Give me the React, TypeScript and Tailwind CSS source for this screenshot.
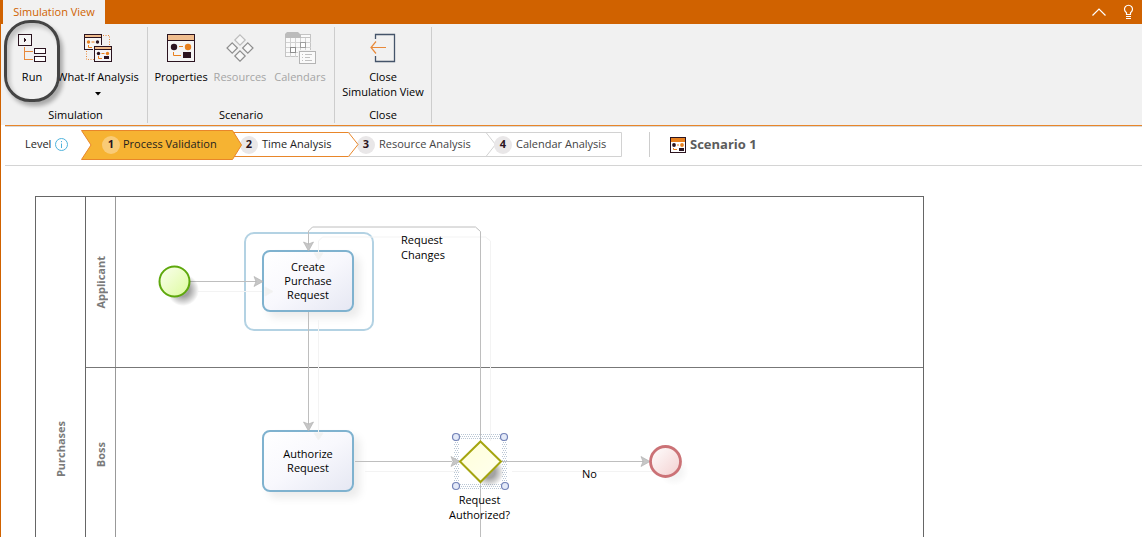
import React, { useState } from 'react';

const RunIcon = () => (
  <svg width="28" height="28" viewBox="0 0 28 28" fill="none" shapeRendering="crispEdges">
    <path d="M6.5 13v12.5H15M6.5 17.5H15" stroke="#e8893a" />
    <rect x="0.5" y="0.5" width="13" height="11" stroke="#2b1420" fill="#f5f5f5" />
    <path d="M6 3.5v5l3-2.5z" fill="#2b1420" />
    <rect x="16.5" y="14.5" width="11" height="5" stroke="#2b1420" fill="#fff" />
    <rect x="16.5" y="22.5" width="11" height="5" stroke="#2b1420" fill="#fff" />
  </svg>
);

const WhatIfIcon = () => (
  <svg width="28" height="28" viewBox="0 0 28 28" fill="none">
    <path d="M19 1.5h6.5V11M2.5 17v8.5H10" stroke="#e8893a" strokeDasharray="1 1.5" />
    <rect x="0.5" y="0.5" width="17" height="15" stroke="#2b1420" fill="#f5f5f5" />
    <rect x="1" y="1" width="16" height="2" fill="#f0bd8e" />
    <path d="M1 3.500h16" stroke="#2b1420" />
    <circle cx="4.5" cy="8" r="1.7" fill="#e8801e" />
    <path d="M7.5 8h3" stroke="#e8801e" />
    <circle cx="13.5" cy="8" r="1.7" fill="#2b1420" />
    <path d="M4.5 11v2.5H8" stroke="#e8801e" />
    <path d="M9 11h9v5H9z" fill="#f1f1f1" />
    <rect x="10.5" y="12.5" width="17" height="15" stroke="#2b1420" fill="#f5f5f5" />
    <rect x="11" y="13" width="16" height="2" fill="#f0bd8e" />
    <path d="M11 15.500h16" stroke="#2b1420" />
    <circle cx="14.5" cy="19.5" r="1.7" fill="#2b1420" />
    <path d="M17.5 19.5h3" stroke="#e8801e" />
    <circle cx="23.5" cy="19.5" r="1.7" fill="#e8801e" />
    <path d="M14.5 22v2.5H18" stroke="#e8801e" />
    <rect x="20" y="22" width="5" height="3" fill="#2b1420" />
  </svg>
);

const PropertiesIcon = () => (
  <svg width="28" height="28" viewBox="0 0 28 28" fill="none">
    <rect x="0.5" y="0.5" width="27" height="27" stroke="#2b1420" fill="#f5f5f5" />
    <rect x="1" y="1" width="26" height="5" fill="#f0bd8e" />
    <path d="M1 6.5h26" stroke="#2b1420" />
    <circle cx="7" cy="13" r="3.2" fill="#2b1420" />
    <path d="M12 12.5h4" stroke="#e8801e" />
    <circle cx="21" cy="13" r="3.2" fill="#e8801e" />
    <path d="M6.5 18v3.5H14" stroke="#e8801e" />
    <rect x="16" y="18" width="8" height="6" fill="#2b1420" />
  </svg>
);

const ResourcesIcon = () => (
  <svg width="28" height="28" viewBox="0 0 28 28" fill="none" strokeWidth="1.2">
    <path d="M14 0.8l5.2 5.2-5.200 5.200-5.200-5.200z" stroke="#bdbdbd" fill="#f8f8f8" />
    <path d="M6.200 8.8l5.200 5.200-5.200 5.200L1 14z" stroke="#8e8e8e" fill="#f8f8f8" />
    <path d="M21.800 8.8l5.200 5.200-5.200 5.200-5.200-5.200z" stroke="#8e8e8e" fill="#f8f8f8" />
    <path d="M14 16.800l5.200 5.200-5.200 5.200-5.200-5.200z" stroke="#8e8e8e" fill="#f8f8f8" />
  </svg>
);

const CalendarsIcon = () => (
  <svg width="31" height="32" viewBox="0 0 31 32" fill="none">
    <rect x="0.5" y="2.5" width="25" height="22" fill="#fafafa" stroke="#c4c4c4" />
    <path d="M5.500 6v19M10.500 6v19M15.500 6v19M20.500 6v19M1 10.500h25M1 15.500h25M1 20.500h25" stroke="#d2d2d2" />
    <path d="M0 2l2-2h11l3 3v3H0z" fill="#bcbcbc" />
    <path d="M16 5.500h9.500" stroke="#c4c4c4" />
    <rect x="5.500" y="15.500" width="5" height="5" stroke="#8f8f8f" fill="#fff" />
    <rect x="15.500" y="10.500" width="5" height="5" stroke="#9f9f9f" fill="#fff" />
    <path d="M13 18h13v8H13z" fill="#f1f1f1" />
    <rect x="14.500" y="19.500" width="16" height="12" stroke="#b4b4b4" fill="#fafafa" />
    <path d="M17 22.500h1M20 22.500h7M17 25.500h1M20 25.500h5M17 28.500h1M20 28.500h7" stroke="#c0c0c0" />
  </svg>
);

const CloseViewIcon = () => (
  <svg width="26" height="30" viewBox="0 0 26 30" fill="none">
    <path d="M5.500 6V1.500h19v27h-19V23" stroke="#44546a" strokeWidth="1.300" />
    <path d="M1 14.500h15M6 8.500l-5 6 5 6" stroke="#e8893a" strokeWidth="1.200" />
  </svg>
);

const ScenarioIcon = () => (
  <svg width="16" height="16" viewBox="0 0 16 16" fill="none">
    <rect x="0.5" y="0.5" width="15" height="15" fill="#fff" stroke="#2b1420" />
    <rect x="1" y="1" width="14" height="4" fill="#e8801e" />
    <circle cx="4" cy="8" r="1.900" fill="#2b1420" />
    <path d="M7 8h2" stroke="#e8801e" />
    <circle cx="12" cy="8" r="1.900" fill="#e8801e" />
    <path d="M3.500 11v1.500H7" stroke="#e8801e" />
    <rect x="9" y="11" width="5" height="3" fill="#2b1420" />
  </svg>
);

interface RibbonButtonProps {
  icon: React.ReactNode;
  label: React.ReactNode;
  className: string;
  disabled?: boolean;
  hasMenu?: boolean;
}

const RibbonButton: React.FC<RibbonButtonProps> = ({ icon, label, className, disabled, hasMenu }) => (
  <button
    disabled={disabled}
    className={`flex flex-col items-center pt-[3px] whitespace-nowrap disabled:text-[#a5a5a5] ${className}`}
  >
    <span className="mb-[3px] flex h-9 items-center justify-center">{icon}</span>
    <span className="block leading-[15px]">{label}</span>
    {hasMenu && (
      <svg className="mt-2" width="6" height="4" viewBox="0 0 6 4"><path d="M0 0h6L3 3.500z" fill="#000" /></svg>
    )}
  </button>
);

interface RibbonGroupProps {
  title: string;
  children: React.ReactNode;
}

const RibbonGroup: React.FC<RibbonGroupProps> = ({ title, children }) => (
  <section className="flex min-w-24 flex-col justify-between border-r border-[#cdcdcd] px-1">
    <div className="flex items-start">{children}</div>
    <h2 className="text-center leading-4">{title}</h2>
  </section>
);

const STEPS = [
  { name: 'Process Validation', width: 'w-[161px]', pad: 'pl-[21px] gap-[3px]' },
  { name: 'Time Analysis', width: 'w-[127px]', pad: 'pl-2 gap-1' },
  { name: 'Resource Analysis', width: 'w-[147px]', pad: 'pl-2 gap-1' },
  { name: 'Calendar Analysis', width: 'w-[136px]', pad: 'pl-2 gap-1' },
];

const STEP_SHAPES = [
  <svg width="161" height="30" viewBox="0 0 161 30" className="absolute inset-0">
    <path d="M0.500 0.500h151l9 14.500-9 14.500H.5l9.500-14.500z" fill="#f6b332" stroke="#e8862a" />
  </svg>,
  <svg width="127" height="25" viewBox="0 0 127 25" className="absolute inset-0">
    <path d="M0 0.500h116.500l9.500 12-9.500 12H0" fill="#fff" stroke="#e8862a" />
  </svg>,
  <svg width="147" height="25" viewBox="0 0 147 25" className="absolute inset-0">
    <path d="M0 0.500h147M0 24.500h147M137 0.500l9.500 12-9.500 12" fill="none" stroke="#d2d2d2" />
  </svg>,
  <svg width="136" height="25" viewBox="0 0 136 25" className="absolute inset-0">
    <path d="M0 0.500h135.500v24H0" fill="none" stroke="#d2d2d2" />
  </svg>,
];

const Connectors = () => (
  <svg className="absolute top-0 left-0" width="924" height="540" viewBox="0 166 924 540" fill="none">
    <defs>
      <linearGradient id="start" x1="0" y1="0" x2="1" y2="1">
        <stop offset="0" stopColor="#fbfff0" />
        <stop offset="1" stopColor="#dcfb9c" />
      </linearGradient>
      <linearGradient id="end" x1="0" y1="0" x2="1" y2="1">
        <stop offset="0" stopColor="#ffffff" />
        <stop offset="1" stopColor="#f3cfcf" />
      </linearGradient>
      <linearGradient id="gate" x1="0" y1="0" x2="1" y2="1">
        <stop offset="0" stopColor="#ffffd8" />
        <stop offset="1" stopColor="#fffff0" />
      </linearGradient>
      <radialGradient id="shade">
        <stop offset="0.4" stopColor="#000" stopOpacity="0.36" />
        <stop offset="1" stopColor="#000" stopOpacity="0" />
      </radialGradient>
      <pattern id="dots" width="4" height="4" patternUnits="userSpaceOnUse">
        <path d="M0 0h1v1H0zM2 0h1v1H2zM1 2h1v1H1zM3 2h1v1H3z" fill="#b9c6d4" />
      </pattern>
    </defs>

    {/* soft echo of the flow lines */}
    <g stroke="#f3f3f3">
      <path d="M198 291.500h64M318.500 320v118M318.500 260v-19l4-4h163l5 4v200M365 471.500h95M512 471.500h140" />
      <path d="M265 287l8 4.500-8 4.500zM314 253h9l-4.500 7zM314 433h9l-4.500 7z" fill="#f1f1f1" />
    </g>
    <g stroke="#bebebe">
      <path d="M190 281.500h66M308.500 312v112M308.500 244v-13l4-4h163l5 4.500V537M355 461.500h97M501 461.500h143" />
    </g>
    <g fill="#c6c6c6" stroke="#adadad" strokeWidth="0.600">
      <path d="M254 276.500l9 5-9 5 2-5z" />
      <path d="M303.500 242l5 9 5-9-5 2z" />
      <path d="M303.500 422l5 9 5-9-5 2z" />
      <path d="M641 456.500l9 5-9 5 2-5z" />
    </g>

    <circle cx="183" cy="290" r="16" fill="url(#shade)" />
    <circle cx="174.500" cy="281.500" r="15" fill="url(#start)" stroke="#5ea80c" strokeWidth="2" />

    <path fillRule="evenodd" d="M454 434h53v55h-53zM459 440v43h43v-43z" fill="url(#dots)" />
    <path d="M451 456.500l9 5-9 5 2-5z" fill="#c6c6c6" stroke="#adadad" strokeWidth="0.600" />
    <circle cx="489" cy="472" r="15" fill="url(#shade)" />
    <path d="M480.500 441.500l20.500 20-20.500 20.500-20.500-20.500z" fill="url(#gate)" stroke="#a5a510" strokeWidth="2" />
    <g fill="#e4eaf8" stroke="#7483b8" strokeWidth="1.200">
      <circle cx="456" cy="437" r="3.500" />
      <circle cx="504" cy="437" r="3.500" />
      <circle cx="456" cy="486" r="3.500" />
      <circle cx="505" cy="486" r="3.500" />
    </g>

    <circle cx="674" cy="471" r="15" fill="url(#shade)" opacity="0.120" />
    <circle cx="665.500" cy="461.500" r="15" fill="url(#end)" stroke="#cb7276" strokeWidth="2.800" />
  </svg>
);

interface TaskProps {
  className: string;
  children: React.ReactNode;
}

const Task: React.FC<TaskProps> = ({ className, children }) => (
  <div
    className={`absolute flex h-[62px] w-[92px] items-center justify-center rounded-lg border-2 border-[#7fb2cf] bg-linear-to-br from-white via-[#f8f8fd] to-[#e6e8f3] text-center leading-[14px] shadow-[6px_6px_8px_rgba(0,0,0,0.08)] ${className}`}
  >
    {children}
  </div>
);

const LaneTitle: React.FC<{ children: React.ReactNode }> = ({ children }) => (
  <h3 className="flex w-[30px] items-center justify-center border-r border-[#999] font-bold text-[#7a7a7a]">
    <span className="rotate-180 [writing-mode:vertical-rl]">{children}</span>
  </h3>
);

export default function App() {
  const [step, setStep] = useState(0);

  return (
    <div className="flex h-screen flex-col overflow-hidden border-l border-[#d06200] bg-white font-['Open_Sans','Noto_Sans',sans-serif] text-[11px] text-[#1e1e1e]">
      <header className="flex h-6 shrink-0 items-stretch justify-between bg-[#d06200] pl-0.5">
        <button className="w-[102px] bg-[#f1f1f1] text-[#d06200]">Simulation View</button>
        <div className="flex items-center gap-4 pr-2">
          <button aria-label="Collapse ribbon">
            <svg width="16" height="10" viewBox="0 0 16 10" fill="none" stroke="#fff" strokeWidth="1.200">
              <path d="M1.500 8.500L8 2l6.500 6.500" />
            </svg>
          </button>
          <button aria-label="Tips">
            <svg width="11" height="16" viewBox="0 0 11 16" fill="none" stroke="#fff" strokeWidth="1.200">
              <path d="M3.500 10.500V8.700a4 4 0 1 1 4 0v1.800zM3 12.500h5M3 14.500h5" />
            </svg>
          </button>
        </div>
      </header>

      <div className="relative h-[101px] shrink-0 bg-[#f1f1f1] pl-[3px] text-black">
        <div className="flex h-full items-stretch pt-[3px] pb-0.5">
          <RibbonGroup title="Simulation">
            <RibbonButton icon={<RunIcon />} label="Run" className="w-12" />
            <RibbonButton icon={<WhatIfIcon />} label="What-If Analysis" className="mr-[3px] w-[84px]" hasMenu />
          </RibbonGroup>
          <RibbonGroup title="Scenario">
            <RibbonButton icon={<PropertiesIcon />} label="Properties" className="w-[58px]" />
            <RibbonButton icon={<ResourcesIcon />} label="Resources" className="w-[60px]" disabled />
            <RibbonButton icon={<CalendarsIcon />} label="Calendars" className="w-[60px]" disabled />
          </RibbonGroup>
          <RibbonGroup title="Close">
            <RibbonButton icon={<CloseViewIcon />} label={<>Close<br />Simulation View</>} className="w-[88px]" />
          </RibbonGroup>
        </div>
        <div className="pointer-events-none absolute -top-1 left-[3px] h-[82px] w-[56px] rounded-[26px] border-[3px] border-[#444] shadow-[3px_4px_4px_rgba(0,0,0,0.3),inset_3px_4px_4px_rgba(0,0,0,0.2)]" />
      </div>

      <div className="ml-1 flex h-[41px] shrink-0 items-center border-t border-b border-t-[#e8862a] border-b-[#d4d4d4] pb-0.5 pl-5 shadow-[inset_0_1px_0_#d9d9d9]">
        <span className="w-[30px]">Level</span>
        <svg width="14" height="14" viewBox="0 0 14 14" fill="none" stroke="#4fb3dc">
          <circle cx="6.500" cy="6.500" r="6" />
          <path d="M6.500 5.500v4.500M6.500 3v1.200" />
        </svg>
        <ol className="ml-3 flex items-center">
          {STEPS.map((s, i) => (
            <li
              key={s.name}
              className={`relative ${s.width} ${i === 0 ? 'z-20 h-[30px]' : '-ml-2.5 h-[25px]'} ${i === 1 ? 'z-10' : ''}`}
            >
              {STEP_SHAPES[i]}
              <button
                onClick={() => setStep(i)}
                aria-current={step === i ? 'step' : undefined}
                className={`relative flex h-full w-full items-center whitespace-nowrap ${s.pad} ${i > 1 ? 'text-[#444]' : ''}`}
              >
                <span className={`flex size-[18px] items-center justify-center rounded-full font-bold text-[#2b1420] ${i === 0 ? 'bg-[#f9cb77]' : 'bg-[#e9e7e8]'}`}>
                  {i + 1}
                </span>
                {s.name}
              </button>
            </li>
          ))}
        </ol>
        <div className="ml-[27px] flex h-[25px] items-center gap-1 border-l border-[#cdcdcd] pl-5">
          <ScenarioIcon />
          <h1 className="text-[13px] font-bold text-[#5c5c5c]">Scenario 1</h1>
        </div>
      </div>

      <main className="relative -ml-px grow overflow-hidden pt-[30px] pl-[35px] leading-[15px] text-black">
        <div className="flex h-[506px] w-[889px] border border-[#666]">
          <h2 className="flex w-[50px] items-center justify-center border-r border-[#666] font-bold text-[#7a7a7a]">
            <span className="rotate-180 [writing-mode:vertical-rl]">Purchases</span>
          </h2>
          <div className="flex grow flex-col">
            <div className="flex h-[171px] border-b border-[#777]">
              <LaneTitle>Applicant</LaneTitle>
            </div>
            <div className="flex h-[174px] border-b border-[#777]">
              <LaneTitle>Boss</LaneTitle>
            </div>
          </div>
        </div>

        <div className="absolute top-[66px] left-[244px] h-[99px] w-[130px] rounded-[10px] border-2 border-[#b3d2e3]" />
        <Task className="top-[84px] left-[262px]">Create<br />Purchase<br />Request</Task>
        <Task className="top-[264px] left-[262px]">Authorize<br />Request</Task>
        <Connectors />
        <p className="absolute top-[66px] left-[401px]">Request<br />Changes</p>
        <p className="absolute top-[326px] left-[449px] text-center">Request<br />Authorized?</p>
        <p className="absolute top-[300px] left-[582px]">No</p>
      </main>
    </div>
  );
}
